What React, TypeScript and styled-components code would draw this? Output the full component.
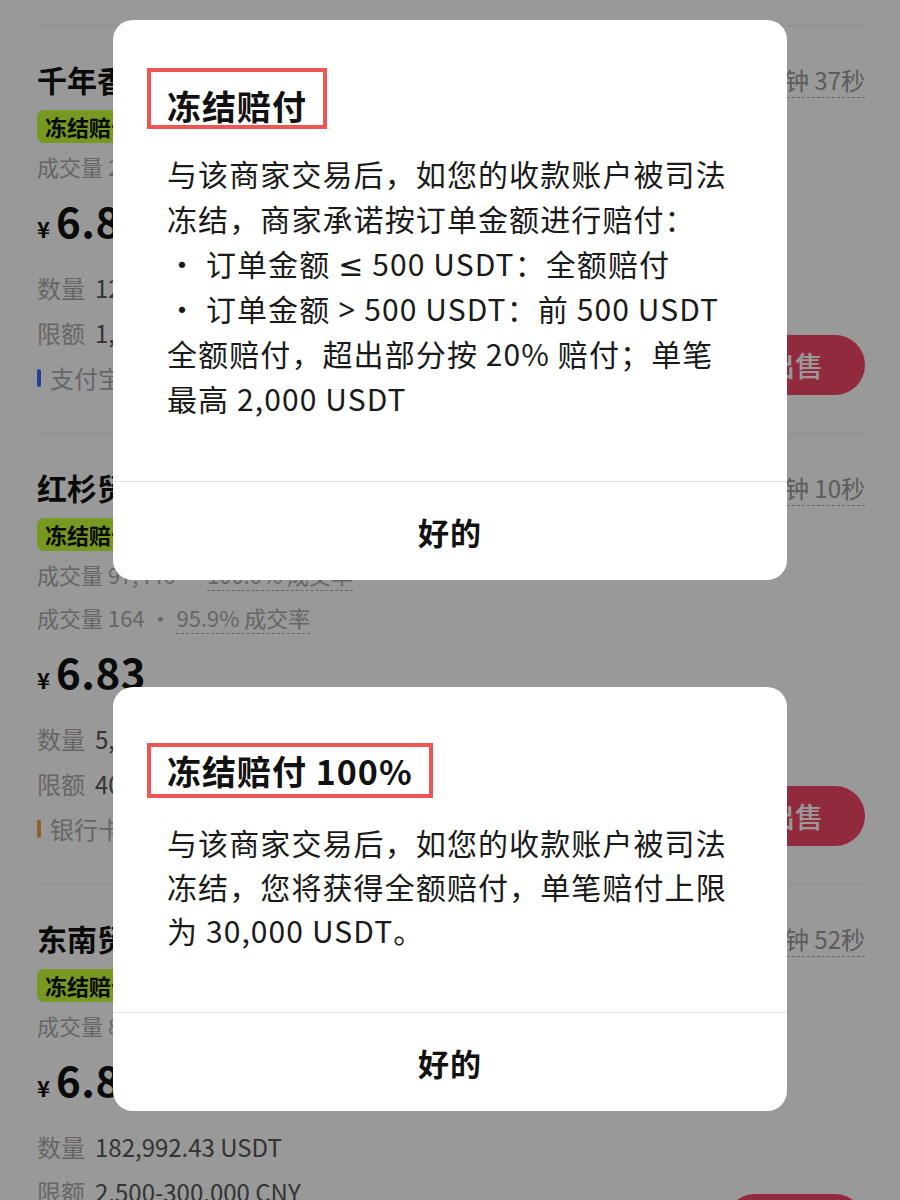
import styled, { createGlobalStyle } from "styled-components";

const GlobalStyle = createGlobalStyle`
	html, body {
		margin: 0;
		padding: 0;
	}
	body {
		font-family: "Noto Sans CJK SC", "Noto Sans", sans-serif;
		background: #fff;
	}
`;

const Page = styled.div`
	position: relative;
	width: 900px;
	height: 1200px;
	overflow: hidden;
	background: #fff;
`;

const List = styled.div`
	padding: 25px 35px 0 37px;
`;

const Ad = styled.div`
	display: flex;
	justify-content: space-between;
	border-top: 1px solid #ececec;
	padding: 33px 0 33px;
`;

const Info = styled.div`
	display: flex;
	flex-direction: column;
	align-items: flex-start;
`;

const Name = styled.div`
	font-size: 30px;
	font-weight: 700;
	line-height: 40px;
	color: #111;
`;

const Tag = styled.span`
	margin-top: 11px;
	height: 33px;
	line-height: 33px;
	padding: 0 8px;
	border-radius: 7px;
	background: #c6ff3a;
	font-size: 22px;
	font-weight: 700;
	color: #111;
`;

const Stats = styled.div`
	margin-top: 3px;
	font-size: 22px;
	line-height: 40px;
	color: #ababab;
`;

const Rate = styled.span`
	border-bottom: 1px dashed #ababab;
`;

const Price = styled.div`
	margin-top: 7px;
	height: 54px;
	line-height: 54px;
	color: #111;
	font-weight: 700;
	font-size: 42px;
	white-space: nowrap;
`;

const Currency = styled.span`
	font-size: 22px;
	line-height: 1;
	margin-right: 6px;
`;

const Amount = styled.span`
	letter-spacing: 0.5px;
`;

const Fields = styled.div`
	margin-top: 18px;
`;

const Field = styled.div`
	font-size: 24px;
	line-height: 45px;
	color: #555;
	white-space: nowrap;
`;

const Label = styled.span`
	color: #ababab;
	margin-right: 10px;
`;

const Pay = styled.div`
	display: flex;
	align-items: center;
	gap: 9px;
	font-size: 24px;
	line-height: 45px;
	color: #ababab;
`;

const PayBar = styled.span<{ $color: string }>`
	width: 4px;
	height: 18px;
	border-radius: 2px;
	background: ${(p) => p.$color};
`;

const Side = styled.div`
	display: flex;
	flex-direction: column;
	align-items: flex-end;
	justify-content: space-between;
`;

const Timer = styled.div`
	margin-top: 1px;
	font-size: 24px;
	line-height: 40px;
	color: #999;
	text-decoration: underline dashed #aaa;
	text-underline-offset: 7px;
	text-decoration-thickness: 1px;
`;

const SellButton = styled.button`
	width: 140px;
	height: 60px;
	margin-bottom: 5px;
	border: none;
	border-radius: 30px;
	background: #f24667;
	color: #fff;
	font-family: inherit;
	font-size: 28px;
	font-weight: 500;
`;

const Overlay = styled.div`
	position: absolute;
	inset: 0;
	background: rgba(0, 0, 0, 0.4);
	display: flex;
	flex-direction: column;
	align-items: center;
	padding-top: 20px;
	gap: 107px;
`;

const Dialog = styled.div`
	width: 674px;
	background: #fff;
	border-radius: 20px;
	overflow: hidden;
`;

const Content = styled.div`
	display: flex;
	flex-direction: column;
	align-items: flex-start;
	padding: 0 54px 60px;
`;

// red annotation frame drawn round the title
const TitleBox = styled.div<{ $top: number; $padTop: number; $padBottom: number }>`
	margin: ${(p) => p.$top}px 0 22px -20px;
	padding: ${(p) => p.$padTop}px 16px ${(p) => p.$padBottom}px 16px;
	border: 4px solid #ee5555;
`;

const Title = styled.div`
	font-size: 34px;
	font-weight: 700;
	line-height: 38px;
	letter-spacing: 1px;
	color: #111;
`;

const Body = styled.div<{ $lh: number }>`
	font-size: 30px;
	line-height: ${(p) => p.$lh}px;
	letter-spacing: 1.1px;
	color: #1a1a1a;
	white-space: nowrap;
`;

const Sym = styled.span`
	font-family: "Noto Sans", "DejaVu Sans", sans-serif;
	line-height: 1;
`;

const OkButton = styled.div`
	height: 98px;
	border-top: 1px solid #e2e2e2;
	display: flex;
	align-items: center;
	justify-content: center;
	font-size: 31px;
	font-weight: 700;
	letter-spacing: 1px;
	color: #111;
`;

interface AdData {
	name: string;
	time: string;
	stats: { count: string; rate: string }[];
	price: string;
	qty: string;
	limit: string;
	pay: string;
	payColor: string;
}

const ads: AdData[] = [
	{
		name: "千年香商贸",
		time: "平均放币 1分钟 37秒",
		stats: [{ count: "2,356", rate: "98.6% 成交率" }],
		price: "6.85",
		qty: "12,804.20 USDT",
		limit: "1,000-50,000 CNY",
		pay: "支付宝",
		payColor: "#3f6cf5",
	},
	{
		name: "红杉贸易",
		time: "平均放币 2分钟 10秒",
		stats: [
			{ count: "97,446", rate: "100.0% 成交率" },
			{ count: "164", rate: "95.9% 成交率" },
		],
		price: "6.83",
		qty: "5,620.00 USDT",
		limit: "400-38,000 CNY",
		pay: "银行卡",
		payColor: "#f0a040",
	},
	{
		name: "东南贸易",
		time: "平均放币 1分钟 52秒",
		stats: [{ count: "8,913", rate: "99.1% 成交率" }],
		price: "6.84",
		qty: "182,992.43 USDT",
		limit: "2,500-300,000 CNY",
		pay: "银行卡",
		payColor: "#f0a040",
	},
];

const AdRow = ({ ad }: { ad: AdData }) => (
	<Ad>
		<Info>
			<Name>{ad.name}</Name>
			<Tag>冻结赔付</Tag>
			{ad.stats.map((s, i) => (
				<Stats key={i}>
					成交量 {s.count} · <Rate>{s.rate}</Rate>
				</Stats>
			))}
			<Price>
				<Currency>¥</Currency>
				<Amount>{ad.price}</Amount>
			</Price>
			<Fields>
				<Field>
					<Label>数量</Label>
					{ad.qty}
				</Field>
				<Field>
					<Label>限额</Label>
					{ad.limit}
				</Field>
				<Pay>
					<PayBar $color={ad.payColor} />
					{ad.pay}
				</Pay>
			</Fields>
		</Info>
		<Side>
			<Timer>{ad.time}</Timer>
			<SellButton>出售</SellButton>
		</Side>
	</Ad>
);

const App = () => {
	return (
		<Page>
			<GlobalStyle />
			<List>
				{ads.map((ad) => (
					<AdRow key={ad.name} ad={ad} />
				))}
			</List>
			<Overlay>
				<Dialog>
					<Content>
						<TitleBox $top={48} $padTop={15} $padBottom={0}>
							<Title>冻结赔付</Title>
						</TitleBox>
						<Body $lh={45}>
							与该商家交易后，如您的收款账户被司法
							<br />
							冻结，商家承诺按订单金额进行赔付：
							<br />・ 订单金额 <Sym>≤</Sym> 500 USDT：全额赔付
							<br />・ 订单金额 <Sym>&gt;</Sym> 500 USDT：前 500 USDT
							<br />
							全额赔付，超出部分按 20% 赔付；单笔
							<br />
							最高 2,000 USDT
						</Body>
					</Content>
					<OkButton>好的</OkButton>
				</Dialog>
				<Dialog>
					<Content>
						<TitleBox $top={56} $padTop={5} $padBottom={4}>
							<Title>冻结赔付 100%</Title>
						</TitleBox>
						<Body $lh={44}>
							与该商家交易后，如您的收款账户被司法
							<br />
							冻结，您将获得全额赔付，单笔赔付上限
							<br />
							为 30,000 USDT。
						</Body>
					</Content>
					<OkButton>好的</OkButton>
				</Dialog>
			</Overlay>
		</Page>
	);
};

export default App;
